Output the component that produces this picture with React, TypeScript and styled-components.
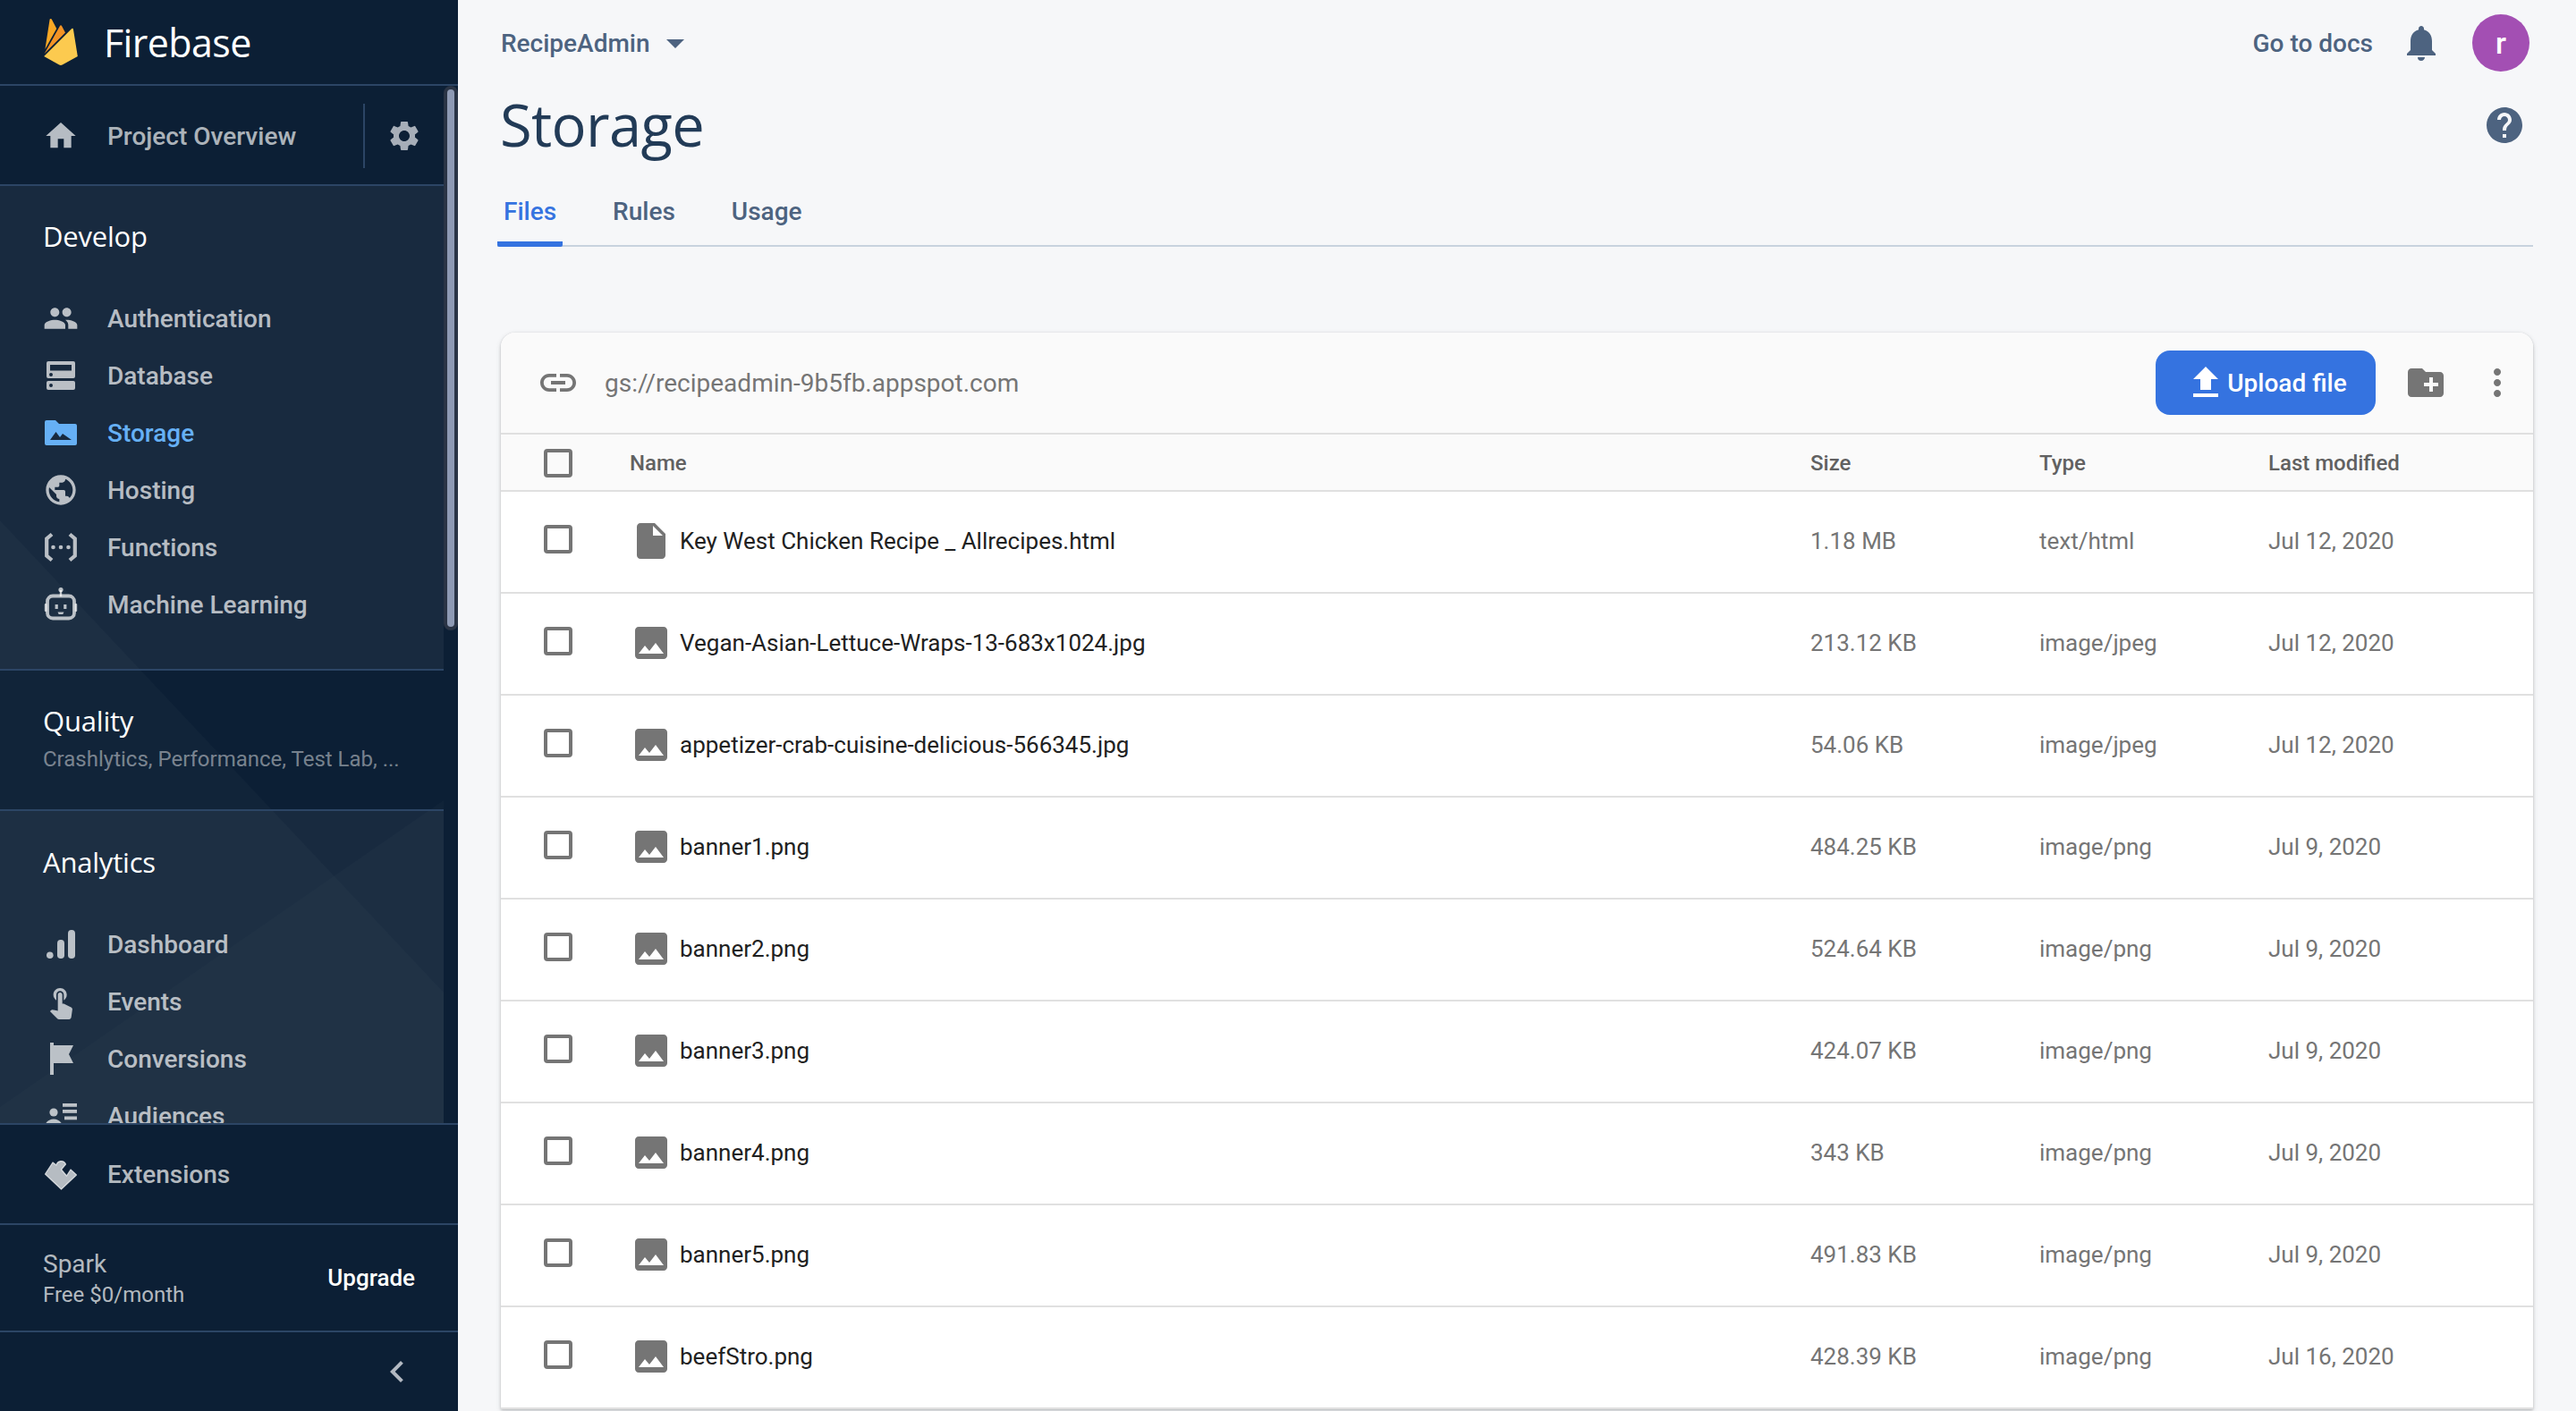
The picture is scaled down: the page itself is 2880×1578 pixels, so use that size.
import React from "react"
import styled, { createGlobalStyle } from "styled-components"
import {
  MdArrowDropDown,
  MdChevronLeft,
  MdCreateNewFolder,
  MdFileUpload,
  MdHelp,
  MdHome,
  MdImage,
  MdInsertDriveFile,
  MdLink,
  MdMoreVert,
  MdNotifications,
  MdPeople,
  MdPublic,
  MdSettings,
  MdTouchApp,
} from "react-icons/md"

const GlobalStyle = createGlobalStyle`
  html, body { margin: 0; height: 100%; overflow: hidden; background: #f6f7f9; }
  body { font-family: Roboto, "Liberation Sans", sans-serif; }
  #root { height: 100%; }
`

const heading = `"Open Sans", Roboto, sans-serif`

const Shell = styled.div`
  display: flex;
  height: 1578px;
  overflow: hidden;
`

/* ---------- sidebar ---------- */
const Sidebar = styled.aside`
  width: 512px;
  flex: none;
  display: flex;
  flex-direction: column;
  background: #0c1f35;
`
const Brand = styled.div`
  height: 94px;
  flex: none;
  display: flex;
  align-items: center;
  padding-left: 42px;
  gap: 22px;
  border-bottom: 2px solid #2c4565;
`
const BrandName = styled.span`
  font-family: ${heading};
  font-size: 43px;
  letter-spacing: -0.6px;
  color: #fff;
`
const ScrollArea = styled.div`
  position: relative;
  flex: 1;
  min-height: 0;
  overflow: hidden;
  padding-right: 16px;
`
const Track = styled.div`
  position: absolute;
  top: 0;
  right: 0;
  width: 16px;
  height: 609px;
  padding: 4px;
  box-sizing: border-box;
  border-radius: 8px;
  background: #2a3445;
`
const Thumb = styled.div`
  height: 100%;
  border-radius: 4px;
  background: #8e9ab4;
`
const Facets = styled.svg`
  position: absolute;
  top: 0;
  left: 0;
  width: 496px;
  height: 1161px;
`
const OverviewRow = styled.div`
  position: relative;
  height: 108px;
  padding: 2px 0 0 48px;
  display: flex;
  align-items: center;
  background: #0c1f35;
  border-bottom: 2px solid #2c4565;
`
const OverviewText = styled.span`
  flex: 1;
  margin-left: 32px;
  font-size: 28px;
  font-weight: 500;
  color: rgba(255, 255, 255, 0.68);
`
const OverviewGear = styled.div`
  width: 90px;
  height: 72px;
  display: flex;
  align-items: center;
  justify-content: center;
  border-left: 2px solid #2c4565;
  box-sizing: border-box;
  color: #a7aeb8;
`
const Section = styled.section<{ $open?: boolean; $height: number }>`
  position: relative;
  height: ${(p) => p.$height}px;
  box-sizing: border-box;
  padding-left: 48px;
  background: ${(p) => (p.$open ? "rgba(255,255,255,0.05)" : "transparent")};
  border-bottom: 2px solid #2c4565;
`
const SectionTitle = styled.h3<{ $top: number; $bottom: number }>`
  margin: 0;
  padding: ${(p) => p.$top}px 0 ${(p) => p.$bottom}px;
  font-family: ${heading};
  font-size: 31px;
  line-height: 40px;
  font-weight: 400;
  letter-spacing: -0.2px;
  color: #fff;
`
const SectionHint = styled.div`
  font-size: 24px;
  line-height: 32px;
  color: rgba(255, 255, 255, 0.45);
`
const NavRow = styled.div<{ $active?: boolean }>`
  height: 64px;
  display: flex;
  align-items: center;
  gap: 32px;
  font-size: 28px;
  font-weight: 500;
  color: ${(p) => (p.$active ? "#66b0f5" : "rgba(255,255,255,0.7)")};
`
const Glyph = styled.svg`
  width: 40px;
  height: 40px;
  flex: none;
  fill: currentColor;
`
const FooterBlock = styled.div`
  flex: none;
  background: #0c1f35;
  border-top: 2px solid #2c4565;
`
const ExtensionsRow = styled(NavRow)`
  height: 110px;
  padding-left: 48px;
`
const PlanRow = styled.div`
  height: 122px;
  display: flex;
  align-items: center;
  justify-content: space-between;
  box-sizing: border-box;
  padding: 0 48px;
  border-top: 2px solid #2c4565;
  border-bottom: 2px solid #2c4565;
`
const PlanText = styled.div`
  margin-top: 2px;
`
const PlanName = styled.div`
  font-size: 28px;
  line-height: 36px;
  color: rgba(255, 255, 255, 0.7);
`
const PlanPrice = styled.div`
  font-size: 24px;
  line-height: 32px;
  color: rgba(255, 255, 255, 0.7);
`
const UpgradeLink = styled.span`
  font-size: 26px;
  font-weight: 500;
  color: #fff;
`
const CollapseRow = styled.div`
  height: 88px;
  display: flex;
  align-items: center;
  justify-content: flex-end;
  padding-right: 44px;
  color: #b3b9c2;
`

/* ---------- main ---------- */
const Main = styled.main`
  flex: 1;
  min-width: 0;
  padding: 0 48px;
  background: #f6f7f9;
`
const TopBar = styled.div`
  height: 96px;
  display: flex;
  align-items: center;
  justify-content: space-between;
  margin-right: 4px;
`
const ProjectPicker = styled.div`
  display: flex;
  align-items: center;
  gap: 4px;
  font-size: 28px;
  font-weight: 500;
  color: #4d6380;
`
const TopActions = styled.div`
  display: flex;
  align-items: center;
  color: #4d6380;
  font-size: 28px;
  font-weight: 500;
`
const BellWrap = styled.span`
  display: flex;
  margin: 0 33px 0 30px;
`
const Avatar = styled.div`
  width: 64px;
  height: 64px;
  border-radius: 50%;
  background: #a34fb3;
  color: #fff;
  display: flex;
  align-items: center;
  justify-content: center;
  font-size: 34px;
`
const TitleRow = styled.div`
  height: 88px;
  display: flex;
  align-items: center;
  justify-content: space-between;
  color: #4d6380;
`
const PageTitle = styled.h1`
  margin: -3px 0 0 -1px;
  font-family: ${heading};
  font-size: 65px;
  line-height: 88px;
  font-weight: 400;
  letter-spacing: -0.6px;
  color: #223b57;
`
const HelpWrap = styled.span`
  display: flex;
  margin-right: 8px;
`
const Tabs = styled.div`
  height: 92px;
  box-sizing: border-box;
  display: flex;
  align-items: flex-end;
  gap: 49px;
  margin-left: -4px;
  border-bottom: 2px solid #c8d2de;
`
const Tab = styled.div<{ $active?: boolean }>`
  height: 78px;
  padding: 16px 7px 0;
  box-sizing: border-box;
  margin-bottom: -2px;
  font-size: 28px;
  line-height: 46px;
  font-weight: 500;
  color: ${(p) => (p.$active ? "#3573e0" : "#4d6380")};
  border-bottom: 6px solid ${(p) => (p.$active ? "#3573e0" : "transparent")};
  border-radius: 0 0 2px 2px;
`
const Card = styled.div`
  margin-top: 96px;
  background: #fff;
  border-radius: 16px 16px 0 0;
  box-shadow: 0 1px 3px rgba(60, 64, 67, 0.3), 0 2px 6px rgba(60, 64, 67, 0.12);
  overflow: hidden;
`
const CardBar = styled.div`
  height: 112px;
  display: flex;
  align-items: center;
  padding: 0 16px 0 40px;
  background: #fafafa;
  border-bottom: 2px solid #e0e0e0;
  color: #757575;
`
const BucketUrl = styled.span`
  flex: 1;
  margin-left: 28px;
  font-size: 28px;
  color: #757575;
`
const UploadButton = styled.button`
  width: 246px;
  height: 72px;
  display: flex;
  align-items: center;
  justify-content: center;
  border: 0;
  border-radius: 16px;
  background: #3573e0;
  color: #fff;
  font: 500 28px Roboto, sans-serif;
`
const BarIcon = styled.span<{ $left: number }>`
  display: flex;
  margin-left: ${(p) => p.$left}px;
`
const Grid = styled.div`
  display: grid;
  grid-template-columns: 144px 1320px 256px 256px 1fr;
  align-items: center;
  box-sizing: border-box;
  border-bottom: 2px solid #e0e0e0;
`
const HeadRow = styled(Grid)`
  height: 64px;
  padding-top: 2px;
  background: #fafafa;
  font-size: 24px;
  font-weight: 500;
  color: #616161;
`
const FileRow = styled(Grid)`
  height: 114px;
  padding-bottom: 3px;
  font-size: 26px;
  color: #757575;
`
const CheckCell = styled.div`
  display: flex;
  padding-left: 48px;
`
const RowCheckCell = styled(CheckCell)`
  margin-bottom: 3px;
`
const CheckBox = styled.span`
  width: 32px;
  height: 32px;
  box-sizing: border-box;
  border: 4px solid #757575;
  border-radius: 4px;
`
const NameCell = styled.div`
  display: flex;
  align-items: center;
  gap: 8px;
  color: #212121;
`
const FileIcon = styled.span`
  display: flex;
  color: #757575;
`

/* ---------- drawn icons ---------- */
const DatabaseIcon = () => (
  <Glyph viewBox="0 0 40 40">
    <path
      fillRule="evenodd"
      d="M6 4h28a2 2 0 012 2v15a2 2 0 01-2 2H6a2 2 0 01-2-2V6a2 2 0 012-2zm2 4v6.500h24V8zm1 9a2 2 0 100 4 2 2 0 000-4z"
    />
    <path
      fillRule="evenodd"
      d="M6 26h28a2 2 0 012 2v6a2 2 0 01-2 2H6a2 2 0 01-2-2v-6a2 2 0 012-2zm3 3a2 2 0 100 4 2 2 0 000-4z"
    />
  </Glyph>
)
const FolderIcon = () => (
  <Glyph viewBox="0 0 40 40">
    <path
      fillRule="evenodd"
      d="M14 6H4a2 2 0 00-2 2v24a2 2 0 002 2h32a2 2 0 002-2V12a2 2 0 00-2-2H18zM8 28l6.500-9 4.500 6 3-4 10 7z"
    />
  </Glyph>
)
const FunctionsIcon = () => (
  <Glyph viewBox="0 0 40 40">
    <path d="M10 5.500L4.200 10.500v19l5.800 5M30 5.500l5.800 5v19l-5.800 5" fill="none" stroke="currentColor" strokeWidth="4.200" />
    <circle cx="11.500" cy="20" r="2.300" />
    <circle cx="20" cy="20" r="2.300" />
    <circle cx="28.500" cy="20" r="2.300" />
  </Glyph>
)
const RobotIcon = () => (
  <Glyph viewBox="0 0 40 40">
    <circle cx="20" cy="3.600" r="2.600" />
    <rect x="18.800" y="4" width="2.400" height="7" />
    <rect x="5" y="10.500" width="30" height="25" rx="6" fill="none" stroke="currentColor" strokeWidth="3.800" />
    <rect x="1.800" y="19" width="2.600" height="9" rx="1" />
    <rect x="35.600" y="19" width="2.600" height="9" rx="1" />
    <rect x="13.600" y="20" width="3.200" height="5" />
    <rect x="23.200" y="20" width="3.200" height="5" />
    <path d="M16.500 28.500h7l-1.200 2.600h-4.600z" />
  </Glyph>
)
const BarsIcon = () => (
  <Glyph viewBox="0 0 40 40">
    <circle cx="7.800" cy="32.200" r="3.800" />
    <rect x="16" y="15" width="8" height="21" rx="3.800" />
    <rect x="28" y="4" width="8" height="32" rx="3.800" />
  </Glyph>
)
const FlagIcon = () => (
  <Glyph viewBox="0 0 40 40">
    <path d="M8 2h4v3h22l-5 10 5 10H12v13H8z" />
  </Glyph>
)
const AudienceIcon = () => (
  <Glyph viewBox="0 0 40 40">
    <circle cx="12" cy="16" r="4.600" />
    <path d="M2 33c0-6 5-9.500 10-9.500S22 27 22 33z" />
    <rect x="22" y="6" width="16" height="3.800" />
    <rect x="22" y="13" width="16" height="3.800" />
    <rect x="24" y="20.500" width="14" height="3.800" />
    <rect x="26" y="28" width="12" height="3.800" />
  </Glyph>
)
const PuzzleIcon = () => (
  <Glyph viewBox="0 0 40 40">
    <path
      d="M2.500 20L11 7l4 3a5.500 5.500 0 0110.500-1L20.500 15l6 7 4.500-7 6.500 6-17 16z"
      stroke="currentColor"
      strokeWidth="1.200"
      strokeLinejoin="round"
    />
  </Glyph>
)
const FirebaseLogo = () => (
  <svg width="52" height="52" viewBox="0 0 24 24" style={{ flex: "none" }}>
    <path fill="#f9a825" d="M3.890 15.672L6.255.461A.542.542 0 017.270.288l2.543 4.771z" />
    <path fill="#f39325" d="M14.300 7.147l-1.820-3.482a.542.542 0 00-.96 0L3.530 17.984z" />
    <path fill="#fcca4f" d="M20.684 19.364l-2.250-13.928A.542.542 0 0017.516 5.140L3.316 19.364l7.856 4.403a1.621 1.621 0 001.588 0z" />
  </svg>
)

const developItems: [string, React.ReactNode, boolean?][] = [
  ["Authentication", <MdPeople size={40} />],
  ["Database", <DatabaseIcon />],
  ["Storage", <FolderIcon />, true],
  ["Hosting", <MdPublic size={40} />],
  ["Functions", <FunctionsIcon />],
  ["Machine Learning", <RobotIcon />],
]
const analyticsItems: [string, React.ReactNode][] = [
  ["Dashboard", <BarsIcon />],
  ["Events", <MdTouchApp size={40} />],
  ["Conversions", <FlagIcon />],
  ["Audiences", <AudienceIcon />],
]
const files = [
  ["Key West Chicken Recipe _ Allrecipes.html", "1.18 MB", "text/html", "Jul 12, 2020"],
  ["Vegan-Asian-Lettuce-Wraps-13-683x1024.jpg", "213.12 KB", "image/jpeg", "Jul 12, 2020"],
  ["appetizer-crab-cuisine-delicious-566345.jpg", "54.06 KB", "image/jpeg", "Jul 12, 2020"],
  ["banner1.png", "484.25 KB", "image/png", "Jul 9, 2020"],
  ["banner2.png", "524.64 KB", "image/png", "Jul 9, 2020"],
  ["banner3.png", "424.07 KB", "image/png", "Jul 9, 2020"],
  ["banner4.png", "343 KB", "image/png", "Jul 9, 2020"],
  ["banner5.png", "491.83 KB", "image/png", "Jul 9, 2020"],
  ["beefStro.png", "428.39 KB", "image/png", "Jul 16, 2020"],
]

export default function App() {
  return (
    <Shell>
      <GlobalStyle />
      <Sidebar>
        <Brand>
          <FirebaseLogo />
          <BrandName>Firebase</BrandName>
        </Brand>
        <ScrollArea>
          <Facets viewBox="0 0 496 1161">
            <polygon points="0,486 496,1014 496,1161 0,1161" fill="rgba(255,255,255,0.025)" />
            <polygon points="496,799 0,1142 0,1161 496,1161" fill="rgba(255,255,255,0.02)" />
          </Facets>
          <OverviewRow>
            <MdHome size={40} color="#b6bcc3" />
            <OverviewText>Project Overview</OverviewText>
            <OverviewGear>
              <MdSettings size={40} />
            </OverviewGear>
          </OverviewRow>
          <Section $open $height={542}>
            <SectionTitle $top={36} $bottom={40}>Develop</SectionTitle>
            {developItems.map(([label, icon, active]) => (
              <NavRow key={label} $active={active}>
                {icon}
                {label}
              </NavRow>
            ))}
          </Section>
          <Section $height={157}>
            <SectionTitle $top={36} $bottom={7}>Quality</SectionTitle>
            <SectionHint>Crashlytics, Performance, Test Lab, ...</SectionHint>
          </Section>
          <Section $open $height={352}>
            <SectionTitle $top={37} $bottom={40}>Analytics</SectionTitle>
            {analyticsItems.map(([label, icon]) => (
              <NavRow key={label}>
                {icon}
                {label}
              </NavRow>
            ))}
          </Section>
          <Track>
            <Thumb />
          </Track>
        </ScrollArea>
        <FooterBlock>
          <ExtensionsRow>
            <PuzzleIcon />
            Extensions
          </ExtensionsRow>
          <PlanRow>
            <PlanText>
              <PlanName>Spark</PlanName>
              <PlanPrice>Free $0/month</PlanPrice>
            </PlanText>
            <UpgradeLink>Upgrade</UpgradeLink>
          </PlanRow>
          <CollapseRow>
            <MdChevronLeft size={48} />
          </CollapseRow>
        </FooterBlock>
      </Sidebar>

      <Main>
        <TopBar>
          <ProjectPicker>
            RecipeAdmin
            <MdArrowDropDown size={48} />
          </ProjectPicker>
          <TopActions>
            Go to docs
            <BellWrap>
              <MdNotifications size={48} />
            </BellWrap>
            <Avatar>r</Avatar>
          </TopActions>
        </TopBar>
        <TitleRow>
          <PageTitle>Storage</PageTitle>
          <HelpWrap>
            <MdHelp size={48} />
          </HelpWrap>
        </TitleRow>
        <Tabs>
          <Tab $active>Files</Tab>
          <Tab>Rules</Tab>
          <Tab>Usage</Tab>
        </Tabs>
        <Card>
          <CardBar>
            <MdLink size={48} />
            <BucketUrl>gs://recipeadmin-9b5fb.appspot.com</BucketUrl>
            <UploadButton>
              <MdFileUpload size={48} />
              Upload file
            </UploadButton>
            <BarIcon $left={32}>
              <MdCreateNewFolder size={48} />
            </BarIcon>
            <BarIcon $left={32}>
              <MdMoreVert size={48} />
            </BarIcon>
          </CardBar>
          <HeadRow>
            <CheckCell>
              <CheckBox />
            </CheckCell>
            <div>Name</div>
            <div>Size</div>
            <div>Type</div>
            <div>Last modified</div>
          </HeadRow>
          {files.map(([name, size, type, date], i) => (
            <FileRow key={name}>
              <RowCheckCell>
                <CheckBox />
              </RowCheckCell>
              <NameCell>
                <FileIcon>{i === 0 ? <MdInsertDriveFile size={48} /> : <MdImage size={48} />}</FileIcon>
                {name}
              </NameCell>
              <div>{size}</div>
              <div>{type}</div>
              <div>{date}</div>
            </FileRow>
          ))}
        </Card>
      </Main>
    </Shell>
  )
}
